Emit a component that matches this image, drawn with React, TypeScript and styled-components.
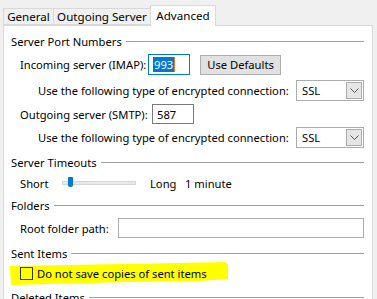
import styled, { createGlobalStyle } from "styled-components";

const GlobalStyle = createGlobalStyle`
  html, body {
    margin: 0;
    background: #f0f0f0;
    font-family: "Noto Sans", "Liberation Sans", sans-serif;
    font-size: 11.2px;
    color: #000;
    overflow: hidden;
  }
`;

const Page = styled.div`
  width: 377px;
  height: 299px;
  padding-left: 3px;
  box-sizing: border-box;
  overflow: hidden;
`;

const TabBar = styled.div`
  display: flex;
  align-items: flex-end;
  height: 25px;
`;

const Tab = styled.div<{ $active?: boolean; $w: number }>`
  box-sizing: border-box;
  width: ${(p) => p.$w}px;
  height: ${(p) => (p.$active ? "21px" : "17px")};
  margin-bottom: ${(p) => (p.$active ? "-1px" : "0")};
  margin-left: -1px;
  border: 1px solid #d9d9d9;
  border-bottom: ${(p) => (p.$active ? "none" : "1px solid #d9d9d9")};
  background: ${(p) => (p.$active ? "#fff" : "#f0f0f0")};
  position: relative;
  z-index: ${(p) => (p.$active ? 1 : 0)};
  display: flex;
  align-items: center;
  justify-content: center;
  white-space: nowrap;
  font-size: 11.6px;
  padding-bottom: ${(p) => (p.$active ? "2px" : "0")};
  &:first-child { margin-left: 0; }
`;

const Panel = styled.div`
  box-sizing: border-box;
  width: 370px;
  height: 280px;
  background: #fff;
  border: 1px solid #d9d9d9;
  border-bottom: none;
  padding: 7px 8px 0 7px;
`;

const GroupHeader = styled.div<{ $top?: number }>`
  display: flex;
  align-items: center;
  height: 16px;
  margin-top: ${(p) => p.$top ?? 0}px;
  gap: 4px;
  white-space: nowrap;
  &::after {
    content: "";
    flex: 1;
    height: 1px;
    background: #a0a0a0;
  }
`;

const Row = styled.div<{ $top: number; $indent: number; $h?: number }>`
  display: flex;
  align-items: center;
  height: ${(p) => p.$h ?? 21}px;
  margin-top: ${(p) => p.$top}px;
  padding-left: ${(p) => p.$indent}px;
  position: relative;
`;

const Label = styled.span<{ $w?: number }>`
  white-space: nowrap;
  ${(p) => (p.$w ? `width: ${p.$w}px; flex: none;` : "")}
`;

const TextBox = styled.div<{ $w: number; $focus?: boolean }>`
  box-sizing: border-box;
  width: ${(p) => p.$w}px;
  height: ${(p) => (p.$focus ? 21 : 20)}px;
  border: 1px solid ${(p) => (p.$focus ? "#0078d7" : "#7a7a7a")};
  display: flex;
  align-items: center;
  padding-left: 4px;
  flex: none;
`;

const Selected = styled.span`
  background: #0078d7;
  color: #fff;
  padding: 0 1px;
  line-height: 15px;
  border-right: 1px solid #e87d1e;
`;

const Button = styled.div`
  box-sizing: border-box;
  width: 81px;
  height: 20px;
  margin-left: 10px;
  background: #e1e1e1;
  border: 1px solid #adadad;
  display: flex;
  align-items: center;
  justify-content: center;
`;

const Select = styled.div`
  box-sizing: border-box;
  width: 68px;
  height: 21px;
  margin-left: auto;
  border: 1px solid #acacac;
  display: flex;
  align-items: center;
  padding: 0 1px 0 5px;
`;

const SelectValue = styled.span`
  flex: 1;
`;

const DropButton = styled.div`
  box-sizing: border-box;
  width: 16px;
  height: 17px;
  background: #e5e5e5;
  border: 1px solid #acacac;
  display: flex;
  align-items: center;
  justify-content: center;
`;

const Track = styled.div`
  position: relative;
  box-sizing: border-box;
  width: 74px;
  height: 4px;
  margin: 0 14px 0 0;
  background: #e7eaea;
  border: 1px solid #d6d6d6;
  flex: none;
`;

const Thumb = styled.div`
  position: absolute;
  left: 5px;
  top: -5px;
  width: 5px;
  height: 10px;
  background: #0078d7;
  border-radius: 1px 1px 2px 2px;
`;

const WideBox = styled.div`
  box-sizing: border-box;
  flex: 1;
  height: 20px;
  border: 1px solid #adadad;
`;

const Highlight = styled.svg`
  position: absolute;
  left: -2px;
  top: -3px;
  z-index: 0;
`;

const CheckBox = styled.div`
  box-sizing: border-box;
  width: 13px;
  height: 13px;
  border: 1px solid #333;
  margin-right: 4px;
  position: relative;
  z-index: 1;
  flex: none;
`;

const CheckText = styled.span`
  position: relative;
  z-index: 1;
  white-space: nowrap;
`;

const Chevron = () => (
  <svg width="9" height="5" viewBox="0 0 9 5">
    <path d="M0.5 0.5 L4.5 4.5 L8.5 0.5" fill="none" stroke="#555" strokeWidth="1" />
  </svg>
);

const Encryption = ({ top }: { top: number }) => (
  <Row $top={top} $indent={27}>
    <Label>Use the following type of encrypted connection:</Label>
    <Select>
      <SelectValue>SSL</SelectValue>
      <DropButton>
        <Chevron />
      </DropButton>
    </Select>
  </Row>
);

export default function App() {
  return (
    <Page>
      <GlobalStyle />
      <TabBar>
        <Tab $w={51}>General</Tab>
        <Tab $w={98}>Outgoing Server</Tab>
        <Tab $w={66} $active>Advanced</Tab>
      </TabBar>
      <Panel>
        <GroupHeader>Server Port Numbers</GroupHeader>
        <Row $top={5} $indent={9}>
          <Label $w={128}>Incoming server (IMAP):</Label>
          <TextBox $w={42} $focus>
            <Selected>993</Selected>
          </TextBox>
          <Button>Use Defaults</Button>
        </Row>
        <Encryption top={5} />
        <Row $top={3} $indent={9} $h={20}>
          <Label $w={132}>Outgoing server (SMTP):</Label>
          <TextBox $w={42}>587</TextBox>
        </Row>
        <Encryption top={3} />
        <GroupHeader $top={6}>Server Timeouts</GroupHeader>
        <Row $top={5} $indent={9} $h={16}>
          <Label $w={42}>Short</Label>
          <Track>
            <Thumb />
          </Track>
          <Label $w={35}>Long</Label>
          <Label>1 minute</Label>
        </Row>
        <GroupHeader $top={6}>Folders</GroupHeader>
        <Row $top={5} $indent={9} $h={20}>
          <Label $w={98}>Root folder path:</Label>
          <WideBox />
        </Row>
        <GroupHeader $top={7}>Sent Items</GroupHeader>
        <Row $top={4} $indent={9} $h={17}>
          <Highlight width="222" height="24" viewBox="0 0 222 24">
            <path d="M1 4 L170 1 L216 0 L219 2 L219 17 L190 19 L120 20 L40 22 L2 23 Z" fill="#ffff00" />
          </Highlight>
          <CheckBox />
          <CheckText>Do not save copies of sent items</CheckText>
        </Row>
        <GroupHeader $top={7}>Deleted Items</GroupHeader>
      </Panel>
    </Page>
  );
}
